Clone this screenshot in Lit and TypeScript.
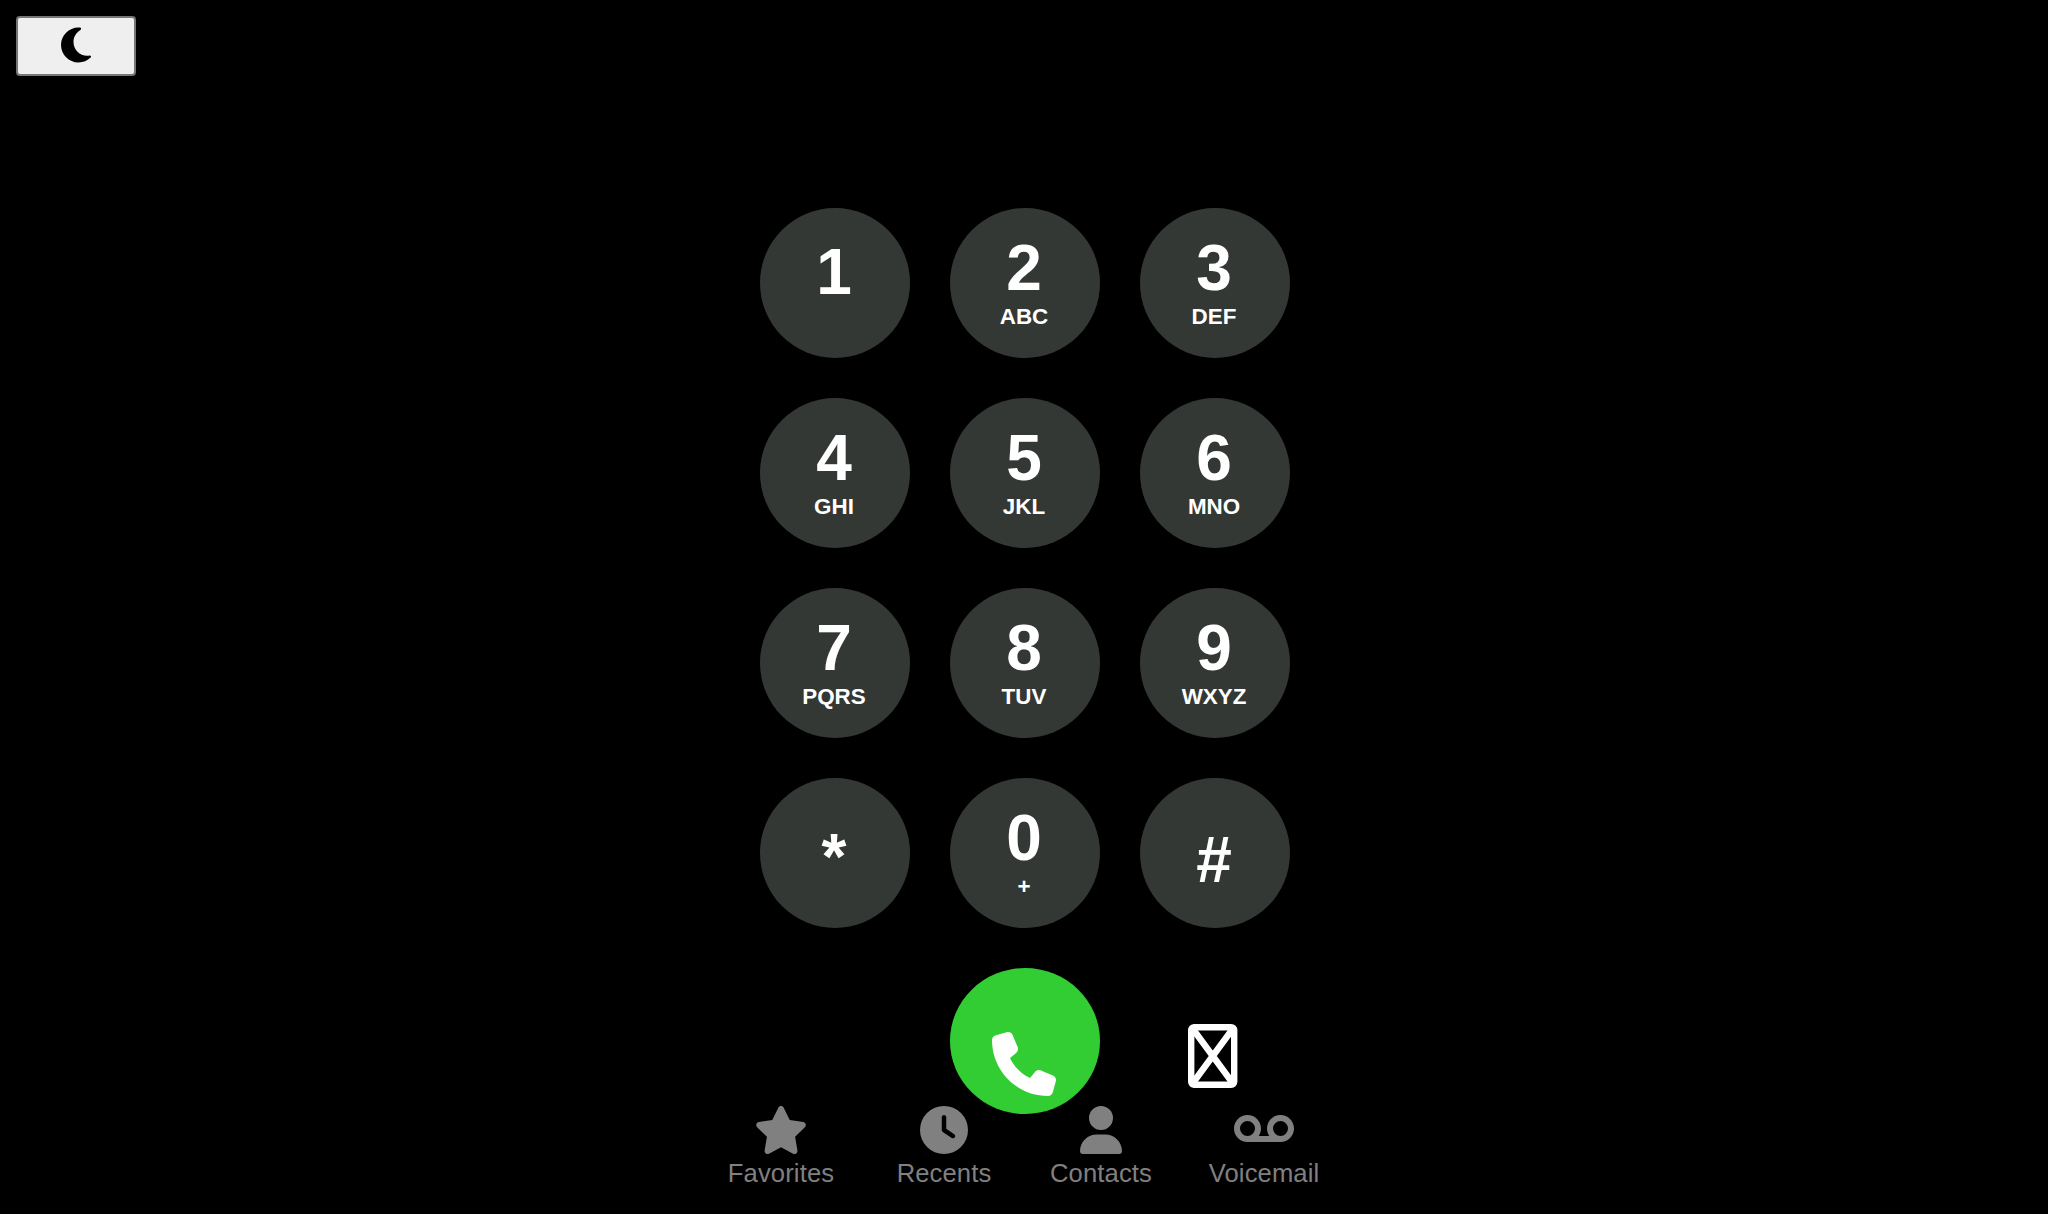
import { LitElement, html, css, svg } from "lit";
import { customElement } from "lit/decorators.js";

interface Key {
  digit: string;
  letters?: string;
  kind?: string;
}

const KEYS: Key[] = [
  { digit: "1", kind: "one" },
  { digit: "2", letters: "ABC" },
  { digit: "3", letters: "DEF" },
  { digit: "4", letters: "GHI" },
  { digit: "5", letters: "JKL" },
  { digit: "6", letters: "MNO" },
  { digit: "7", letters: "PQRS" },
  { digit: "8", letters: "TUV" },
  { digit: "9", letters: "WXYZ" },
  { digit: "*", kind: "star" },
  { digit: "0", letters: "+" },
  { digit: "#", kind: "hash" },
];

const MOON =
  "M223.5 32C100 32 0 132.3 0 256S100 480 223.5 480c60.6 0 115.5-24.2 155.8-63.4c5-4.9 6.3-12.5 3.1-18.7s-10.1-9.7-17-8.5c-9.8 1.7-19.8 2.6-30.1 2.6c-96.9 0-175.5-78.8-175.5-176c0-65.8 36-123.1 89.3-153.3c6.1-3.5 9.2-10.5 7.7-17.3s-7.3-11.9-14.3-12.5c-6.3-.5-12.6-.8-19-.8z";
const PHONE =
  "M164.9 24.6c-7.7-18.6-28-28.5-47.4-23.2l-88 24C12.1 30.2 0 46 0 64C0 311.4 200.6 512 448 512c18 0 33.8-12.1 38.6-29.5l24-88c5.3-19.4-4.6-39.7-23.2-47.4l-96-40c-16.3-6.8-35.2-2.1-46.3 11.6L304.7 368C234.3 334.7 177.3 277.7 144 207.3L193.3 167c13.7-11.2 18.4-30 11.6-46.3l-40-96z";
const STAR =
  "M316.9 18C311.6 7 300.4 0 288.1 0s-23.4 7-28.8 18L195 150.3 51.4 171.5c-12 1.8-22 10.2-25.7 21.7s-.7 24.2 7.9 32.7L137.8 329 113.2 474.7c-2 12 3 24.2 12.9 31.3s23 8 33.8 2.3l128.3-68.5 128.3 68.5c10.8 5.7 23.9 4.9 33.8-2.3s14.9-19.3 12.9-31.3L438.5 329 542.7 225.9c8.6-8.5 11.7-21.2 7.9-32.7s-13.7-19.9-25.7-21.7L381.2 150.3 316.9 18z";
const CLOCK =
  "M256 0a256 256 0 1 1 0 512A256 256 0 1 1 256 0zM232 120V256c0 8 4 15.5 10.7 20l96 64c11 7.4 25.9 4.4 33.3-6.7s4.4-25.9-6.7-33.3L280 243.2V120c0-13.3-10.7-24-24-24s-24 10.7-24 24z";
const USER =
  "M224 256A128 128 0 1 0 224 0a128 128 0 1 0 0 256zm-45.7 48C79.8 304 0 383.8 0 482.3C0 498.7 13.3 512 29.7 512H418.3c16.4 0 29.7-13.3 29.7-29.7C448 383.8 368.2 304 269.7 304H178.3z";
const VOICEMAIL =
  "M144 320a80 80 0 1 1 0-160 80 80 0 1 1 0 160zm119.8 0c15.3-22.9 24.2-50.4 24.2-80c0-79.5-64.5-144-144-144S0 160.5 0 240s64.5 144 144 144H496c79.5 0 144-64.5 144-144s-64.5-144-144-144s-144 64.5-144 144c0 29.6 8.9 57.1 24.2 80H263.8zM496 160a80 80 0 1 1 0 160 80 80 0 1 1 0-160z";

const TABS = [
  { label: "Favorites", width: 576, path: STAR },
  { label: "Recents", width: 512, path: CLOCK },
  { label: "Contacts", width: 448, path: USER },
  { label: "Voicemail", width: 640, path: VOICEMAIL },
];

const glyph = (path: string, width: number, size: number) => html`<svg
  viewBox="0 0 ${width} 512" width=${(width / 512) * size} height=${size} aria-hidden="true"
>${svg`<path fill="currentColor" fill-rule="evenodd" d=${path}></path>`}</svg>`;

@customElement("app-root")
export class AppRoot extends LitElement {
  static styles = css`
    :host {
      display: flex;
      flex-direction: column;
      align-items: center;
      box-sizing: border-box;
      width: 100%;
      height: 100vh;
      overflow: hidden;
      background: #000;
      color: #fff;
      font-family: Arial, "Liberation Sans", sans-serif;
    }
    svg { display: block; }
    button {
      box-sizing: border-box;
      margin: 0;
      padding: 0;
      font-family: inherit;
      color: inherit;
      border: 0;
      background: none;
    }
    .theme {
      align-self: flex-start;
      display: flex;
      justify-content: center;
      flex: none;
      width: 120px;
      height: 60px;
      margin: 16px 0 0 16px;
      padding-top: 6.5px;
      border: 2px solid #767676;
      border-radius: 4px;
      background: #efefef;
      color: #000;
    }
    .pad {
      display: grid;
      flex: none;
      grid-template-columns: repeat(3, 150px);
      grid-auto-rows: 150px;
      gap: 40px;
      margin: 132px 0 0 2px;
    }
    .key {
      display: flex;
      flex-direction: column;
      align-items: center;
      border-radius: 50%;
      background: #343835;
      font-weight: 700;
      padding: 24px 2px 0 0;
    }
    .key.one { padding-top: 28px; }
    .key.star { padding-top: 43px; }
    .key.hash { padding-top: 46px; }
    .digit { font-size: 64px; line-height: 72px; }
    .letters { font-size: 22.4px; line-height: 25px; }
    .call {
      grid-column: 2;
      display: flex;
      justify-content: center;
      height: 146px;
      padding: 64px 2px 0 0;
      border-radius: 50%;
      background: #32cd32;
    }
    .erase {
      display: flex;
      justify-content: center;
      padding: 56px 4px 0 0;
    }
    .tabs {
      display: grid;
      flex: none;
      grid-template-columns: 169px 157px 157px 169px;
      margin: -12px 3px 0 0;
      color: #808080;
      z-index: 1;
    }
    .tab {
      display: flex;
      flex-direction: column;
      align-items: center;
      gap: 5px;
      font-size: 25.6px;
      line-height: 28px;
      letter-spacing: 0.12px;
    }
  `;

  render() {
    return html`
      <button class="theme" aria-label="Dark mode">${glyph(MOON, 384, 40)}</button>
      <main class="pad">
        ${KEYS.map(
          (k) => html`<button class="key ${k.kind ?? ""}">
            <span class="digit">${k.digit}</span>
            ${k.letters ? html`<span class="letters">${k.letters}</span>` : null}
          </button>`
        )}
        <button class="call" aria-label="Call">${glyph(PHONE, 512, 64)}</button>
        <button class="erase" aria-label="Delete">
          <svg width="50" height="64" viewBox="0 0 50 64" fill="none" stroke="currentColor" stroke-width="6.4">
            <rect x="3.2" y="3.2" width="43" height="57.6" rx="3"></rect>
            <path d="M4.500 4.500L45 59.500M45 4.500L4.500 59.500"></path>
          </svg>
        </button>
      </main>
      <nav class="tabs">
        ${TABS.map(
          (t) => html`<div class="tab">${glyph(t.path, t.width, 48)}<span>${t.label}</span></div>`
        )}
      </nav>
    `;
  }
}
